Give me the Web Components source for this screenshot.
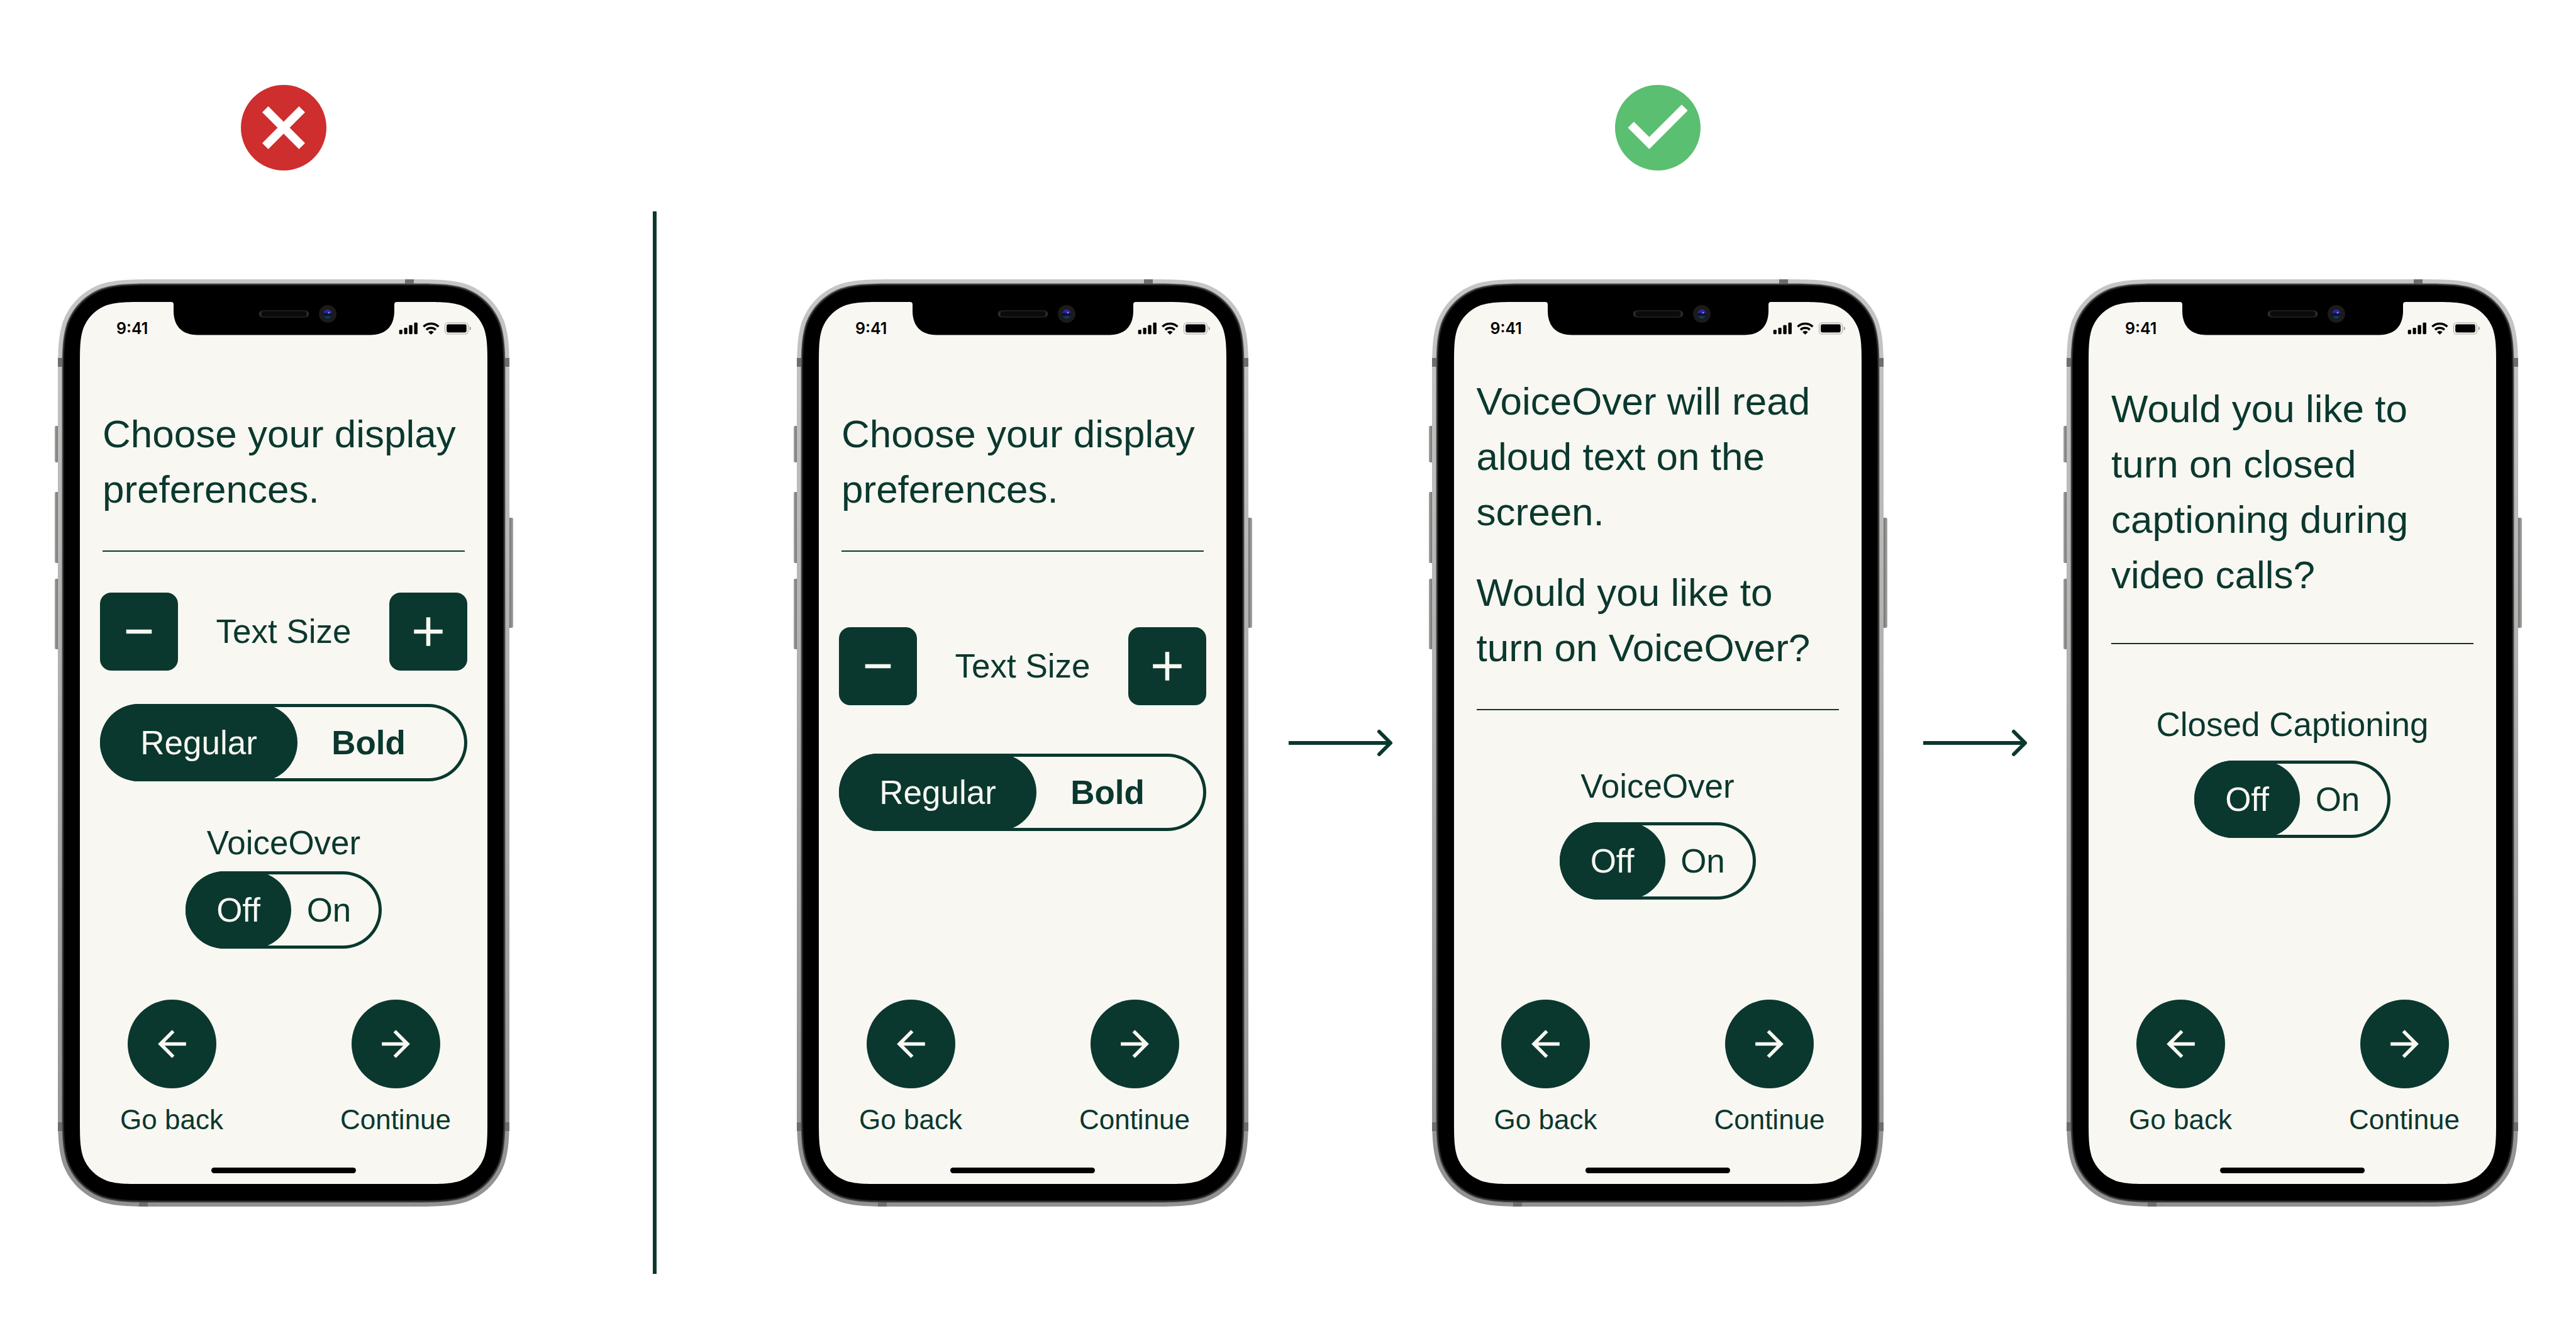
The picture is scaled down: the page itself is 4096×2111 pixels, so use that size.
<!DOCTYPE html>
<html lang="en">
<head>
<meta charset="utf-8">
<title>Onboarding preferences: do and don't</title>
<style>
  :root {
    --ink: #0a382e;
    --paper: #f9f7f2;
  }
  body {
    margin: 0;
    background: #fff;
    color: var(--ink);
    font-family: "Liberation Sans", Arial, Helvetica, sans-serif;
  }
  .screen-lead { margin-top: 82px; }
  .screen-lead.raised { margin-top: 30px; }
  .screen-lead.middle { margin-top: 42px; --rule-gap: 64px; }
  .after-rule { margin-top: 65px; }
  .after-rule.loose { margin-top: 120px; }
  .after-rule.switch { margin-top: 91px; --label-gap: 27px; }
  .after-rule.switch.low { margin-top: 98px; }
  .next { margin-top: 53px; }
  .next.loose { margin-top: 77px; }
  .last { margin-top: 68px; }
</style>
</head>
<body>
<comparison-board>
  <verdict-badge slot="avoid-badge" kind="avoid"></verdict-badge>
  <phone-frame slot="avoid">
    <screen-prompt class="screen-lead"><p>Choose your display preferences.</p></screen-prompt>
    <size-stepper class="after-rule"></size-stepper>
    <choice-pill class="next" name="weight" label="Text weight" first="Regular" second="Bold" wide></choice-pill>
    <choice-pill class="last" name="voiceover" caption="VoiceOver" first="Off" second="On"></choice-pill>
  </phone-frame>

  <verdict-badge slot="prefer-badge" kind="prefer"></verdict-badge>
  <phone-frame slot="prefer">
    <screen-prompt class="screen-lead"><p>Choose your display preferences.</p></screen-prompt>
    <size-stepper class="after-rule loose"></size-stepper>
    <choice-pill class="next loose" name="weight" label="Text weight" first="Regular" second="Bold" wide></choice-pill>
  </phone-frame>
  <flow-arrow slot="prefer"></flow-arrow>
  <phone-frame slot="prefer">
    <screen-prompt class="screen-lead raised"><p>VoiceOver will read aloud text on the screen.</p><p>Would you like to turn on VoiceOver?</p></screen-prompt>
    <choice-pill class="after-rule switch" name="voiceover" caption="VoiceOver" first="Off" second="On"></choice-pill>
  </phone-frame>
  <flow-arrow slot="prefer"></flow-arrow>
  <phone-frame slot="prefer">
    <screen-prompt class="screen-lead middle"><p>Would you like to turn on closed captioning during video calls?</p></screen-prompt>
    <choice-pill class="after-rule switch low" name="captions" caption="Closed Captioning" first="Off" second="On"></choice-pill>
  </phone-frame>
</comparison-board>

<script>
  class ShadowElement extends HTMLElement {
    constructor() {
      super();
      this.attachShadow({ mode: "open" });
    }
    connectedCallback() {
      this.shadowRoot.innerHTML = this.render();
    }
  }

  /* Rounded rectangle with continuous (smoothed) corners. */
  function smoothRect(x, y, w, h, r) {
    const a = 1.528665 * r, b = 1.088493 * r, c = 0.868407 * r,
          d = 0.631494 * r, e = 0.074911 * r, f = 0.372824 * r, g = 0.16906 * r;
    const R = x + w, B = y + h;
    return `M${x + a} ${y}H${R - a}` +
      `C${R - b} ${y} ${R - c} ${y} ${R - d} ${y + e}C${R - f} ${y + g} ${R - g} ${y + f} ${R - e} ${y + d}C${R} ${y + c} ${R} ${y + b} ${R} ${y + a}` +
      `V${B - a}` +
      `C${R} ${B - b} ${R} ${B - c} ${R - e} ${B - d}C${R - g} ${B - f} ${R - f} ${B - g} ${R - d} ${B - e}C${R - c} ${B} ${R - b} ${B} ${R - a} ${B}` +
      `H${x + a}` +
      `C${x + b} ${B} ${x + c} ${B} ${x + d} ${B - e}C${x + f} ${B - g} ${x + g} ${B - f} ${x + e} ${B - d}C${x} ${B - c} ${x} ${B - b} ${x} ${B - a}` +
      `V${y + a}` +
      `C${x} ${y + b} ${x} ${y + c} ${x + e} ${y + d}C${x + g} ${y + f} ${x + f} ${y + g} ${x + d} ${y + e}C${x + c} ${y} ${x + b} ${y} ${x + a} ${y}Z`;
  }

  customElements.define("comparison-board", class extends ShadowElement {
    render() {
      return `<style>
        :host { display: grid; grid-template-columns: 1038fr 6px 3052fr; min-height: 100vh; }
        section { display: flex; flex-direction: column; gap: 173px; padding: 135px 0 0 92px; }
        .avoid { align-items: flex-start; }
        .badge { display: flex; justify-content: center; }
        .avoid .badge { width: 718px; }
        .prefer { padding: 135px 92px 0 223px; }
        .row { display: flex; align-items: center; justify-content: space-between; }
        .divider { background: var(--ink); margin: 336px 0 86px; }
      </style>
      <section class="avoid">
        <div class="badge"><slot name="avoid-badge"></slot></div>
        <div class="row"><slot name="avoid"></slot></div>
      </section>
      <div class="divider"></div>
      <section class="prefer">
        <div class="badge"><slot name="prefer-badge"></slot></div>
        <div class="row"><slot name="prefer"></slot></div>
      </section>`;
    }
  });

  customElements.define("verdict-badge", class extends ShadowElement {
    render() {
      const avoid = this.getAttribute("kind") === "avoid";
      const mark = avoid
        ? "M17 15.59 15.59 17 12 13.41 8.41 17 7 15.59 10.59 12 7 8.41 8.41 7 12 10.59 15.59 7 17 8.41 13.41 12z"
        : "M10 17l-5-5 1.41-1.41L10 14.17l7.59-7.59L19 8z";
      return `<style>:host { display: block; } svg { display: block; width: 136px; height: 136px; }</style>
      <svg viewBox="2 2 20 20" role="img" aria-label="${avoid ? "Avoid" : "Prefer"}">
        <circle cx="12" cy="12" r="10" fill="${avoid ? "#cf2e2e" : "#5abf70"}"/>
        <path d="${mark}" fill="#fff"/>
      </svg>`;
    }
  });

  customElements.define("flow-arrow", class extends ShadowElement {
    render() {
      return `<style>:host { display: block; } svg { display: block; width: 168px; height: 44px; }</style>
      <svg viewBox="0 0 168 44" fill="none" stroke="var(--ink)" stroke-width="6" aria-hidden="true">
        <path d="M2 22H164"/>
        <path d="M146 4 164 22 146 40" stroke-linecap="round" stroke-linejoin="round"/>
      </svg>`;
    }
  });

  customElements.define("status-bar", class extends ShadowElement {
    render() {
      return `<style>
        :host { display: flex; align-items: center; justify-content: space-between; height: 84px; padding: 0 25px 0 58px; color: #000; font: 600 25px/32px Inter, "Liberation Sans", sans-serif; }
        svg { display: block; width: 116px; height: 20px; }
      </style>
      <time>9:41</time>
      <svg viewBox="866 144 426 74" aria-hidden="true">
        <rect x="867" y="189" width="19" height="26" rx="5"/>
        <rect x="896" y="177" width="19" height="38" rx="5"/>
        <rect x="925" y="162" width="20" height="53" rx="5"/>
        <rect x="955" y="147" width="20" height="68" rx="5"/>
        <g fill="none" stroke="#000" stroke-width="13">
          <path d="M1010 171A65 65 0 0 1 1099 171"/>
          <path d="M1027 189A40 40 0 0 1 1082 189"/>
        </g>
        <path d="M1038 202Q1054 189 1071 202L1056 216Q1054.500 218 1053 216Z"/>
        <rect x="1136.500" y="147.500" width="136" height="67" rx="17" fill="none" stroke="#a3a29f" stroke-width="4"/>
        <rect x="1146" y="157" width="117" height="48" rx="9"/>
        <path d="M1281 169Q1290 173 1290 181Q1290 190 1281 194Z" fill="#a3a29f"/>
      </svg>`;
    }
  });

  customElements.define("phone-frame", class extends ShadowElement {
    render() {
      return `<style>
        :host { display: grid; position: relative; width: 718px; flex: none; }
        .body { grid-area: 1 / 1; display: block; width: 718px; height: 1474px; overflow: visible; }
        .screen { grid-area: 1 / 1; position: relative; display: flex; flex-direction: column; margin: 36px 35px; }
        main { display: flex; flex-direction: column; padding: 0 32px; }
        footer { display: flex; flex-direction: column; align-items: center; gap: 50px; margin-top: auto; padding-bottom: 17px; }
        nav { display: flex; justify-content: space-between; align-self: stretch; padding: 0 56px; }
        .home { width: 230px; height: 9px; border-radius: 5px; background: #000; }
      </style>
      <svg class="body" viewBox="0 0 718 1474" aria-hidden="true">
        <defs>
          <linearGradient id="metal" x1="0" y1="0" x2="0" y2="1">
            <stop offset="0" stop-color="#c6c6c5"/><stop offset=".25" stop-color="#b9b9b8"/>
            <stop offset=".7" stop-color="#a3a2a0"/><stop offset="1" stop-color="#929190"/>
          </linearGradient>
          <linearGradient id="keyL" x1="0" x2="1"><stop offset="0" stop-color="#a8a8a6"/><stop offset=".4" stop-color="#8b8b89"/><stop offset="1" stop-color="#626260"/></linearGradient>
          <linearGradient id="keyR" x1="0" x2="1"><stop offset="0" stop-color="#626260"/><stop offset=".6" stop-color="#8b8b89"/><stop offset="1" stop-color="#a8a8a6"/></linearGradient>
          <linearGradient id="ring" x1="0" y1="0" x2="0" y2="1"><stop offset="0" stop-color="#5c5f5e"/><stop offset="1" stop-color="#4b4a49"/></linearGradient>
          <linearGradient id="grille" x1="0" x2="1"><stop offset="0" stop-color="#3c3c3c"/><stop offset=".05" stop-color="#1c1c1c"/><stop offset=".95" stop-color="#1c1c1c"/><stop offset="1" stop-color="#3c3c3c"/></linearGradient>
          <linearGradient id="lens" x1="0" y1="0" x2="0" y2="1"><stop offset="0" stop-color="#3a2a9c"/><stop offset=".35" stop-color="#2a209a"/><stop offset=".55" stop-color="#080a20"/><stop offset="1" stop-color="#0a5580"/></linearGradient>
        </defs>
        <g fill="url(#keyL)">
          <rect x="-5" y="233" width="7" height="58" rx="2"/>
          <rect x="-5" y="338" width="7" height="113" rx="2"/>
          <rect x="-5" y="476" width="7" height="112" rx="2"/>
        </g>
        <rect x="716" y="379" width="8" height="175" rx="2" fill="url(#keyR)"/>
        <path d="${smoothRect(0, 0, 718, 1474, 107)}" fill="url(#metal)"/>
        <g fill="#6d6d6b">
          <rect x="0" y="125" width="9" height="14"/><rect x="709" y="125" width="9" height="14"/>
          <rect x="0" y="1340" width="9" height="14"/><rect x="709" y="1340" width="9" height="14"/>
          <rect x="552" y="0" width="14" height="9"/><rect x="129" y="1465" width="14" height="9"/>
        </g>
        <path d="${smoothRect(6.5, 6.5, 705, 1461, 101)}" fill="url(#ring)"/>
        <path d="${smoothRect(7.8, 7.8, 702.4, 1458.4, 100)}" fill="#242726"/>
        <path d="${smoothRect(9.8, 9.8, 698.4, 1454.4, 98)}" fill="#000"/>
        <path d="${smoothRect(35, 36, 648, 1402, 68)}" fill="#f9f7f2"/>
        <path d="M180 35.500V36Q184 36 184 40V50C184 74 197 88.400 222 88.400H497C522 88.400 535 74 535 50V40Q535 36 539 36V35.500Z"/>
        <rect x="320" y="49" width="79" height="12" rx="6" fill="url(#grille)"/>
        <rect x="324" y="51" width="71" height="8" rx="4" fill="#0b0b0b"/>
        <circle cx="429" cy="55" r="14" fill="#1b1b1b"/>
        <circle cx="429" cy="55" r="7" fill="url(#lens)"/>
        <circle cx="431" cy="53" r="1.500" fill="#8f7cf0"/>
      </svg>
      <div class="screen">
        <status-bar></status-bar>
        <main><slot></slot></main>
        <footer>
          <nav>
            <nav-action direction="back">Go back</nav-action>
            <nav-action direction="forward">Continue</nav-action>
          </nav>
          <div class="home"></div>
        </footer>
      </div>`;
    }
  });

  customElements.define("screen-prompt", class extends ShadowElement {
    render() {
      return `<style>
        :host { display: block; padding: 0 4px; font-size: 62px; line-height: 88px; }
        .copy { display: flex; flex-direction: column; gap: 40px; }
        ::slotted(p) { margin: 0; }
        hr { margin: var(--rule-gap, 53px) 0 0; border: 0; height: 2px; background: var(--ink); }
      </style>
      <div class="copy"><slot></slot></div>
      <hr>`;
    }
  });

  customElements.define("size-stepper", class extends ShadowElement {
    render() {
      return `<style>
        :host { display: flex; align-items: center; justify-content: space-between; font-size: 53px; line-height: 60px; }
        button { display: grid; place-items: center; width: 124px; height: 124px; padding: 0; border: 0; border-radius: 18px; background: var(--ink); color: var(--paper); }
        svg { width: 78px; height: 78px; fill: currentColor; }
      </style>
      <button aria-label="Decrease text size"><svg viewBox="0 0 24 24"><path d="M5.750 11h12.500v2H5.750z"/></svg></button>
      <span>Text Size</span>
      <button aria-label="Increase text size"><svg viewBox="0 0 24 24"><path d="M19 13h-6v6h-2v-6H5v-2h6V5h2v6h6v2z"/></svg></button>`;
    }
  });

  customElements.define("choice-pill", class extends ShadowElement {
    render() {
      const name = this.getAttribute("name");
      const caption = this.getAttribute("caption");
      const naming = caption ? 'aria-labelledby="caption"' : `aria-label="${this.getAttribute("label")}"`;
      return `<style>
        :host { display: flex; flex-direction: column; align-items: center; gap: var(--label-gap, 15px); font-size: 53px; line-height: 60px; }
        .pill { position: relative; display: flex; width: 312px; height: 123px; border-radius: 62px; box-shadow: inset 0 0 0 5px var(--ink); }
        input { position: absolute; opacity: 0; margin: 0; }
        label { display: flex; align-items: center; justify-content: center; border-radius: 62px; }
        .first { width: 168px; }
        .second { flex: 1; padding-right: 24px; }
        :host([wide]) .pill { width: 100%; }
        :host([wide]) .first { width: 314px; }
        :host([wide]) .second { padding-right: 44px; font-weight: 700; }
        input:checked + label { background: var(--ink); color: var(--paper); }
      </style>
      ${caption ? `<span id="caption">${caption}</span>` : ""}
      <div class="pill" role="radiogroup" ${naming}>
        <input type="radio" id="a" name="${name}" checked><label class="first" for="a">${this.getAttribute("first")}</label>
        <input type="radio" id="b" name="${name}"><label class="second" for="b">${this.getAttribute("second")}</label>
      </div>`;
    }
  });

  customElements.define("nav-action", class extends ShadowElement {
    render() {
      const path = this.getAttribute("direction") === "back"
        ? "M20 11H7.830l5.590-5.590L12 4l-8 8 8 8 1.410-1.410L7.830 13H20v-2z"
        : "M12 4l-1.410 1.410L16.170 11H4v2h12.170l-5.580 5.590L12 20l8-8z";
      return `<style>
        :host { display: block; }
        button { display: flex; flex-direction: column; align-items: center; gap: 24px; width: 180px; padding: 0; border: 0; background: none; color: var(--ink); font: inherit; font-size: 44px; line-height: 52px; white-space: nowrap; }
        .disc { display: grid; place-items: center; width: 141px; height: 141px; border-radius: 50%; background: var(--ink); }
        svg { width: 67px; height: 67px; fill: var(--paper); }
      </style>
      <button><span class="disc"><svg viewBox="0 0 24 24" aria-hidden="true"><path d="${path}"/></svg></span><slot></slot></button>`;
    }
  });
</script>
</body>
</html>
